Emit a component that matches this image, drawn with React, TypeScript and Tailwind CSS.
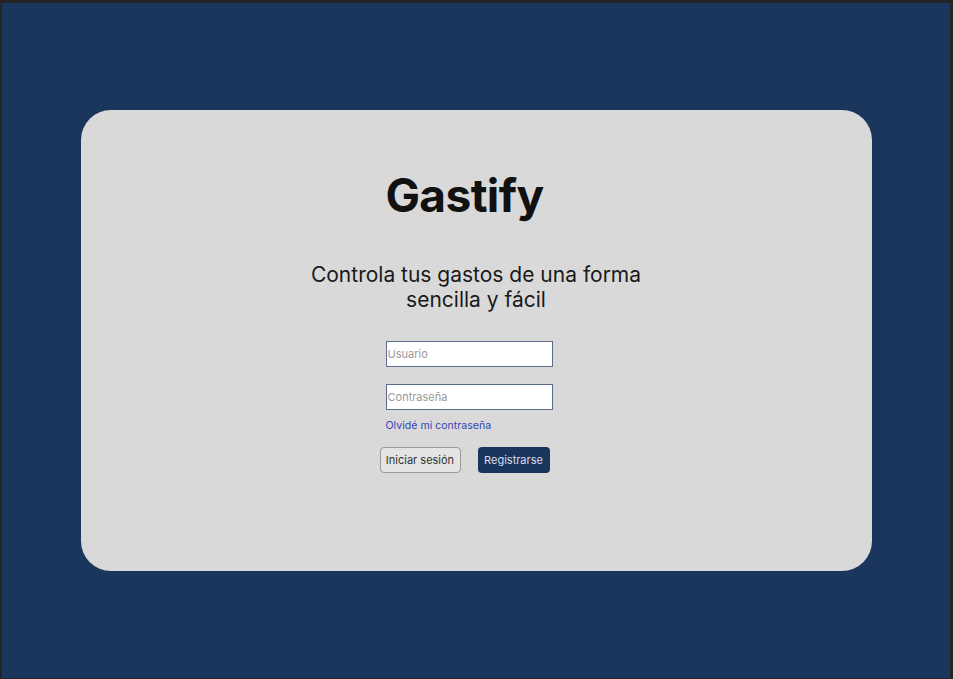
import { useState } from "react";

const App = () => {
    const [inputs, setInputs] = useState({
        usuario: '',
        password: ''
    });

    return (
        <div className="h-screen w-full bg-[#1b365d] border-[#242424] border-l-2 border-t-[3px] border-r-[3px] border-b flex items-center justify-center"
            style={{ fontFamily: "Inter, 'Noto Sans', sans-serif" }}>
            <div className="w-[791px] h-[461px] bg-[#d9d9d9] rounded-[30px] flex flex-col items-center pt-[61px]">
                <h1 className="text-[46px] leading-[48px] font-bold text-[#111111] mr-[23px] tracking-[-0.6px]">Gastify</h1>

                <p className="mt-[43px] text-[21px] leading-[25px] text-[#1a1a1a] text-center">
                    Controla tus gastos de una forma<br />sencilla y fácil
                </p>

                <div className="w-[167px] mr-[14px] mt-[29px] flex flex-col">
                    <input type="text" placeholder="Usuario" value={inputs.usuario}
                        onChange={(e) => setInputs({ ...inputs, usuario: e.target.value })}
                        className="h-[26px] w-full bg-white border border-[#5d6c8c] px-[1px] text-[11px] text-[#333] placeholder:text-[#9a9a9a] outline-none" />

                    <input type="password" placeholder="Contraseña" value={inputs.password}
                        onChange={(e) => setInputs({ ...inputs, password: e.target.value })}
                        className="mt-[17px] h-[26px] w-full bg-white border border-[#5d6c8c] px-[1px] text-[11px] text-[#333] placeholder:text-[#9a9a9a] outline-none" />

                    <a href="#" className="mt-[9px] text-[10.6px] leading-[13px] text-[#3447b8]">Olvidé mi contraseña</a>

                    <div className="flex gap-[17px] mt-[15px] -ml-[6px]">
                        <button className="h-[26px] w-[81px] rounded-[4px] border border-[#9a9a9a] bg-[#e4e4e4] text-[11px] text-[#333]">
                            Iniciar sesión
                        </button>
                        <button className="h-[26px] w-[72px] rounded-[4px] bg-[#1b365d] text-[11px] text-[#d8dde8]">
                            Registrarse
                        </button>
                    </div>
                </div>
            </div>
        </div>
    );
}

export default App;
